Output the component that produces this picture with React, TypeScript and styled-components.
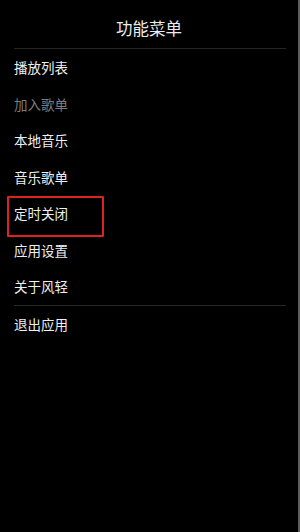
import React from "react";
import styled, { createGlobalStyle } from "styled-components";

const Global = createGlobalStyle`
  html, body { margin: 0; padding: 0; background: #000; }
  body { font-family: "Noto Sans CJK SC", "Noto Sans", sans-serif; }
`;

const Screen = styled.div`
  width: 300px;
  height: 532px;
  box-sizing: border-box;
  background: #000;
  border-right: 2px solid #5c5c5c;
  display: flex;
  flex-direction: column;
`;

const Title = styled.div`
  padding-top: 18px;
  height: 20px;
  line-height: 20px;
  margin-bottom: 10px;
  text-align: center;
  color: #ececec;
  font-size: 16.5px;
`;

const Divider = styled.div`
  height: 1px;
  margin: 0 12px 0 14px;
  background: #262626;
`;

const List = styled.div`
  display: flex;
  flex-direction: column;
`;

const Item = styled.div<{ $disabled?: boolean }>`
  position: relative;
  height: 36.5px;
  display: flex;
  align-items: center;
  padding-left: 14px;
  font-size: 13.5px;
  color: ${(p) => (p.$disabled ? "#7c7c7c" : "#efefef")};
`;

const Highlight = styled.div`
  position: absolute;
  left: 7px;
  top: 1px;
  width: 97px;
  height: 41px;
  box-sizing: border-box;
  border: 2px solid #dd2222;
  border-radius: 1px;
  pointer-events: none;
`;

const items: { label: string; disabled?: boolean; marked?: boolean }[] = [
  { label: "播放列表" },
  { label: "加入歌单", disabled: true },
  { label: "本地音乐" },
  { label: "音乐歌单" },
  { label: "定时关闭", marked: true },
  { label: "应用设置" },
  { label: "关于风轻" },
];

export default function App() {
  return (
    <>
      <Global />
      <Screen>
        <Title>功能菜单</Title>
        <Divider />
        <List>
          {items.map((it) => (
            <Item key={it.label} $disabled={it.disabled}>
              {it.label}
              {it.marked && <Highlight />}
            </Item>
          ))}
        </List>
        <Divider />
        <List>
          <Item>退出应用</Item>
        </List>
      </Screen>
    </>
  );
}
